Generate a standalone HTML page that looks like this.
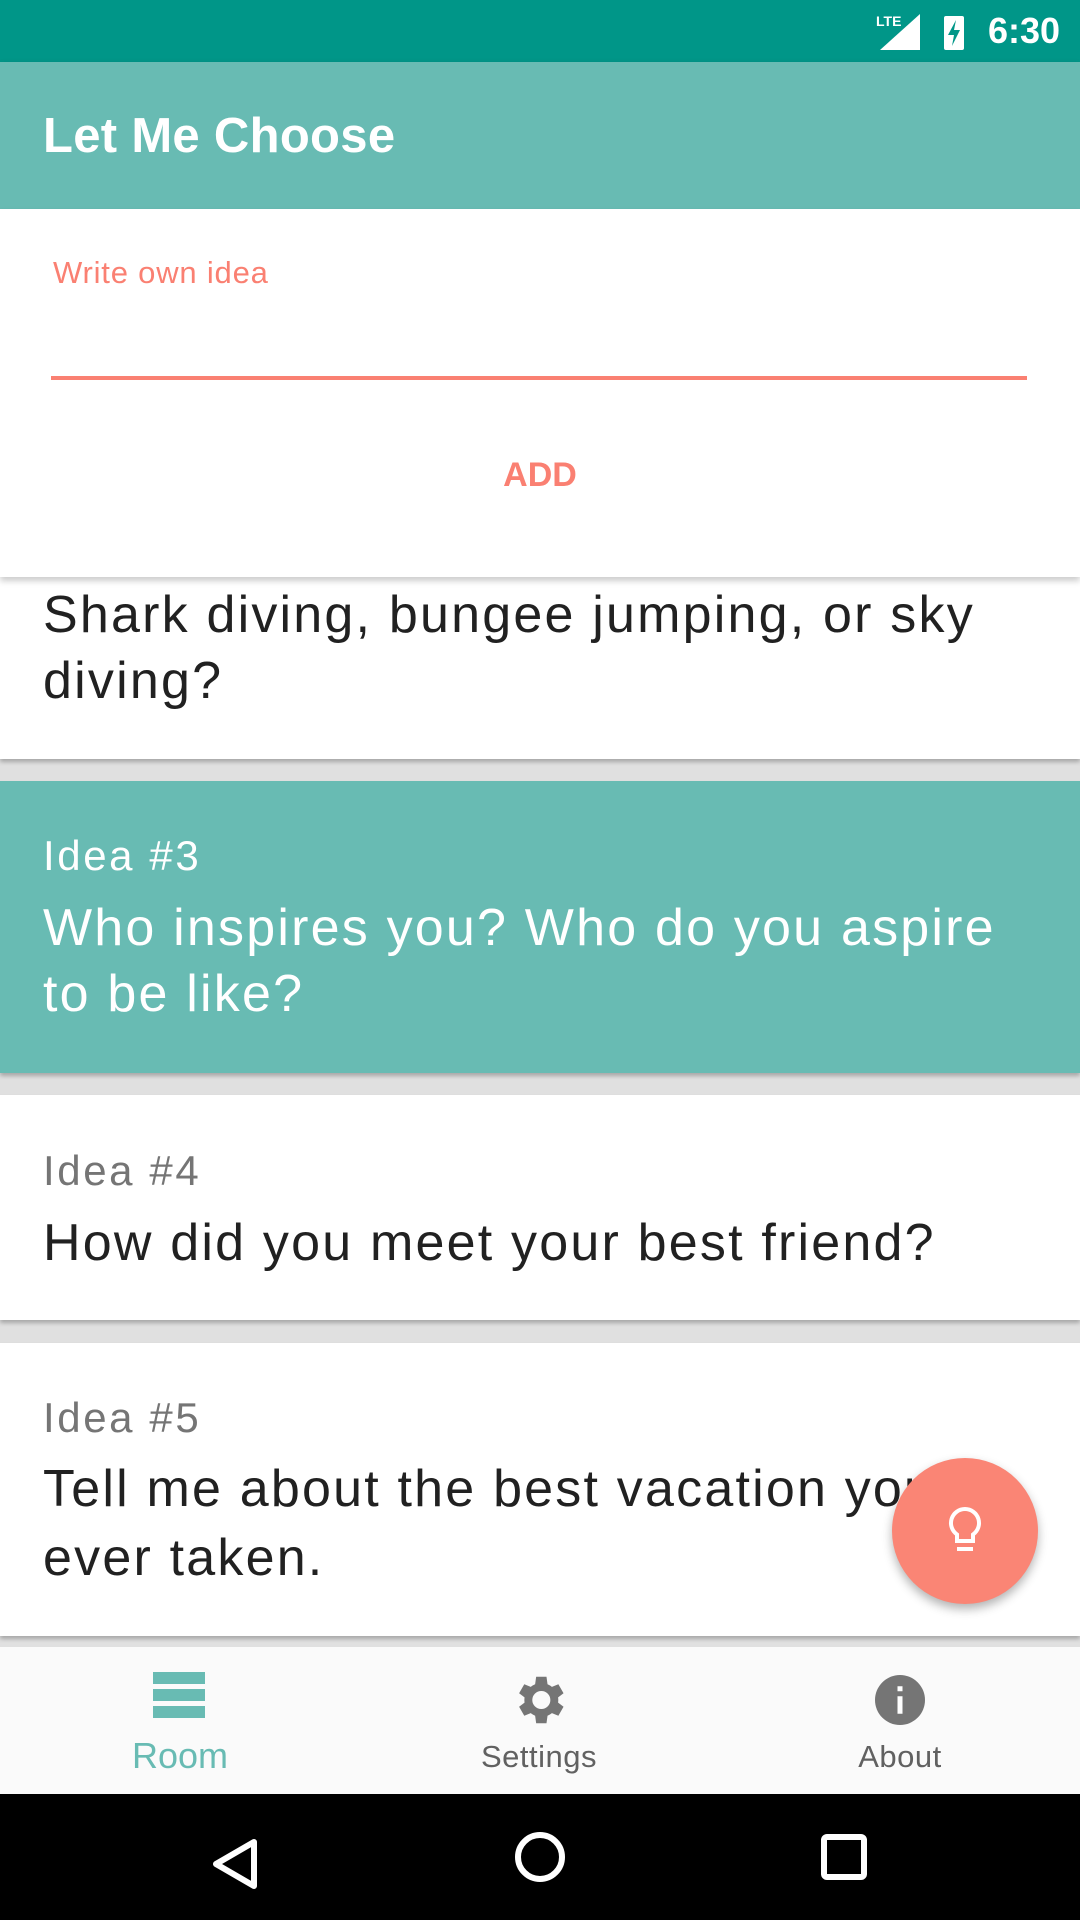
<!DOCTYPE html>
<html><head><meta charset="utf-8"><style>
*{margin:0;padding:0;box-sizing:border-box}
body{width:1080px;height:1920px;background:#e0e0e0;font-family:"Liberation Sans",sans-serif;position:relative;overflow:hidden}
.abs{position:absolute}
.t{position:absolute;left:43px;white-space:nowrap}
.big{font-size:52px;color:#212121;letter-spacing:2.2px}
.small{font-size:42px;color:#757575;letter-spacing:2.6px}
</style></head><body>
<div class="abs" style="left:0;top:0;width:1080px;height:62px;background:#009688"></div>
<div class="abs" style="right:20px;top:10px;color:#fff;font-size:36px;font-weight:bold">6:30</div>
<svg class="abs" style="left:876px;top:12px" width="90" height="40" viewBox="0 0 90 40"><text x="0" y="14" font-size="14" fill="#fff" font-family="Liberation Sans" font-weight="bold">LTE</text><polygon points="4,38 44,38 44,2" fill="#fff"/><rect x="68" y="4" width="20" height="34" rx="2" fill="#fff"/><polygon points="80,8 72,23 78,23 76,34 84,18 78,18" fill="#009688"/></svg>
<div class="abs" style="left:0;top:62px;width:1080px;height:147px;background:#68bbb3;box-shadow:0 3px 6px rgba(0,0,0,.25)"></div>
<div class="t" style="top:108px;color:#fff;font-size:49px;font-weight:bold;letter-spacing:0.3px">Let Me Choose</div>
<div class="abs" style="left:0;top:209px;width:1080px;height:368px;background:#fff;box-shadow:0 4px 6px rgba(0,0,0,.2);z-index:2"></div>
<div class="t" style="left:53px;top:255px;color:#fa8072;font-size:31px;z-index:3;letter-spacing:0.8px">Write own idea</div>
<div class="abs" style="left:51px;top:376px;width:976px;height:4px;background:#fa8072;z-index:3"></div>
<div class="abs" style="left:0;width:1080px;top:456px;text-align:center;color:#fa8072;font-size:34px;font-weight:bold;z-index:3">ADD</div>

<div class="abs" style="left:0;top:577px;width:1080px;height:182px;background:#fff;box-shadow:0 3px 4px rgba(0,0,0,.25)"></div>
<div class="t big" style="top:585px">Shark diving, bungee jumping, or sky</div>
<div class="t big" style="top:651px">diving?</div>

<div class="abs" style="left:0;top:781px;width:1080px;height:292px;background:#68bbb3;box-shadow:0 3px 4px rgba(0,0,0,.25)"></div>
<div class="t small" style="top:832px;color:#fff">Idea #3</div>
<div class="t big" style="top:898px;color:#fff">Who inspires you? Who do you aspire</div>
<div class="t big" style="top:964px;color:#fff">to be like?</div>

<div class="abs" style="left:0;top:1095px;width:1080px;height:225px;background:#fff;box-shadow:0 3px 4px rgba(0,0,0,.25)"></div>
<div class="t small" style="top:1147px">Idea #4</div>
<div class="t big" style="top:1213px">How did you meet your best friend?</div>

<div class="abs" style="left:0;top:1343px;width:1080px;height:293px;background:#fff;box-shadow:0 3px 4px rgba(0,0,0,.25)"></div>
<div class="t small" style="top:1394px">Idea #5</div>
<div class="t big" style="top:1459px">Tell me about the best vacation you've</div>
<div class="t big" style="top:1528px">ever taken.</div>

<div class="abs" style="left:892px;top:1458px;width:146px;height:146px;border-radius:50%;background:#fa8575;box-shadow:0 5px 10px rgba(0,0,0,.3)"></div>
<svg class="abs" style="left:941px;top:1505px" width="48" height="52" viewBox="0 0 48 52"><path d="M24 4a14 14 0 0 0-8 25.5V36h16v-6.5A14 14 0 0 0 24 4z" fill="none" stroke="#fff" stroke-width="4"/><rect x="16" y="42" width="16" height="4" fill="#fff"/></svg>

<div class="abs" style="left:0;top:1647px;width:1080px;height:147px;background:#fafafa"></div>
<svg class="abs" style="left:153px;top:1672px" width="52" height="46" viewBox="0 0 52 46"><rect x="0" y="0" width="52" height="12" fill="#68bbb3"/><rect x="0" y="17" width="52" height="12" fill="#68bbb3"/><rect x="0" y="34" width="52" height="12" fill="#68bbb3"/></svg>
<div class="abs" style="left:80px;width:200px;top:1735px;text-align:center;color:#68bbb3;font-size:36px">Room</div>
<svg class="abs" style="left:508px;top:1669px" width="62" height="62" viewBox="0 0 24 24"><path fill="#757575" d="M19.4 13a7.5 7.5 0 0 0 0-2l2.1-1.6-2-3.5-2.5 1a7 7 0 0 0-1.7-1L14.9 3h-4l-.4 2.9a7 7 0 0 0-1.7 1l-2.5-1-2 3.5L6.4 11a7.5 7.5 0 0 0 0 2l-2.1 1.6 2 3.5 2.5-1a7 7 0 0 0 1.7 1l.4 2.9h4l.4-2.9a7 7 0 0 0 1.7-1l2.5 1 2-3.5zM12.9 15.5a3.5 3.5 0 1 1 0-7 3.5 3.5 0 0 1 0 7z"/></svg>
<div class="abs" style="left:439px;width:200px;top:1739px;text-align:center;color:#616161;font-size:31px;letter-spacing:0.5px">Settings</div>
<svg class="abs" style="left:870px;top:1670px" width="60" height="60" viewBox="0 0 24 24"><circle cx="12" cy="12" r="10" fill="#757575"/><rect x="11" y="10.5" width="2" height="7" fill="#fff"/><rect x="11" y="6.5" width="2" height="2" fill="#fff"/></svg>
<div class="abs" style="left:800px;width:200px;top:1739px;text-align:center;color:#616161;font-size:31px;letter-spacing:0.5px">About</div>

<div class="abs" style="left:0;top:1794px;width:1080px;height:126px;background:#000"></div>
<svg class="abs" style="left:0;top:1794px" width="1080" height="126"><polygon points="254,48 254,92 216,70" fill="none" stroke="#fff" stroke-width="6" stroke-linejoin="round"/><circle cx="540" cy="63" r="22" fill="none" stroke="#fff" stroke-width="6"/><rect x="824" y="43" width="40" height="40" rx="3" fill="none" stroke="#fff" stroke-width="6"/></svg>
</body></html>
